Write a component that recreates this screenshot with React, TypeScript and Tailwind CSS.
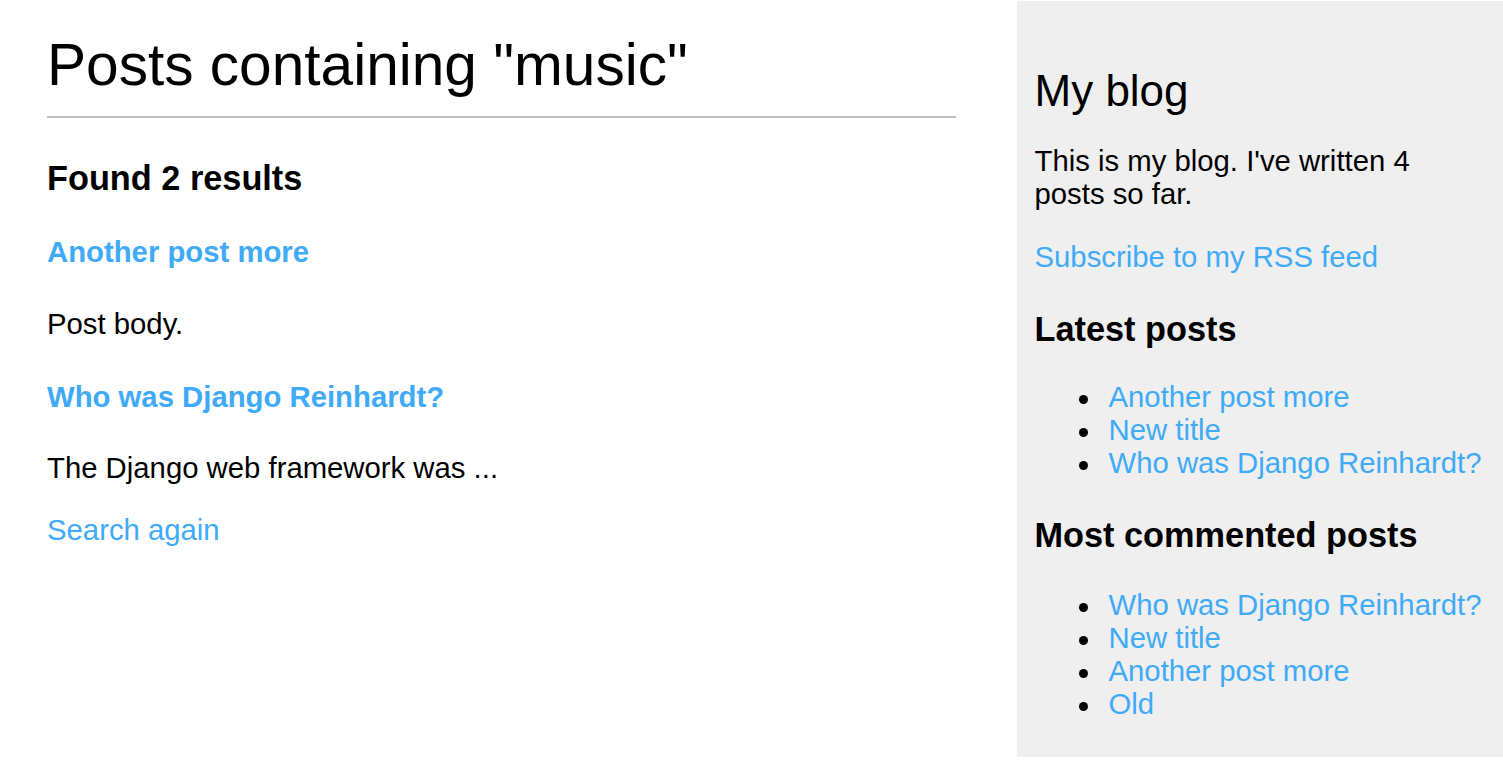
const latest = ['Another post more', 'New title', 'Who was Django Reinhardt?']
const mostCommented = ['Who was Django Reinhardt?', 'New title', 'Another post more', 'Old']

function PostList({ items }: { items: string[] }) {
  return (
    <ul className="pl-[44px]">
      {items.map((item, i) => (
        <li key={i} className="flex items-start leading-[33px]">
          <span className="mt-[15px] mr-[21px] w-[9px] h-[9px] rounded-full bg-black shrink-0" />
          <a href="#" className="text-[#3eaaf8]">{item}</a>
        </li>
      ))}
    </ul>
  )
}

export default function App() {
  return (
    <div
      className="flex w-[1503px] min-h-[766px] bg-white text-black text-[29.3px] leading-[33.5px]"
      style={{ fontFamily: '"Liberation Sans", Arial, Helvetica, sans-serif' }}
    >
      <main className="w-[956px] shrink-0 pl-[47px]">
        <h1 className="pt-[31px] pb-[17.5px] text-[58.6px] leading-[67px] font-normal border-b-2 border-[#bfbfbf]">
          Posts containing "music"
        </h1>
        <h3 className="mt-[41px] text-[34.3px] leading-[39.4px] font-bold">Found 2 results</h3>

        <h2 className="mt-[37px] font-bold">
          <a href="#" className="text-[#3eaaf8]">Another post more</a>
        </h2>
        <p className="mt-[38.5px]">Post body.</p>

        <h2 className="mt-[39.5px] font-bold">
          <a href="#" className="text-[#3eaaf8]">Who was Django Reinhardt?</a>
        </h2>
        <p className="mt-[38px]">The Django web framework was ...</p>

        <p className="mt-[28.5px]">
          <a href="#" className="text-[#3eaaf8]">Search again</a>
        </p>
      </main>

      <aside className="ml-[60.5px] mt-[1px] h-[756px] flex-1 bg-[#efefef] pl-[18px] pr-[20px] pt-[64.8px]">
        <h2 className="text-[44px] leading-[50.6px] font-normal">My blog</h2>
        <p className="mt-[27.3px] w-[400px]">This is my blog. I've written 4 posts so far.</p>
        <p className="mt-[29px]">
          <a href="#" className="text-[#3eaaf8]">Subscribe to my RSS feed</a>
        </p>

        <h3 className="mt-[37px] text-[34.3px] leading-[39.4px] font-bold">Latest posts</h3>
        <div className="mt-[30.5px]">
          <PostList items={latest} />
        </div>

        <h3 className="mt-[37px] text-[34.3px] leading-[39.4px] font-bold">Most commented posts</h3>
        <div className="mt-[32.8px]">
          <PostList items={mostCommented} />
        </div>
      </aside>
    </div>
  )
}
